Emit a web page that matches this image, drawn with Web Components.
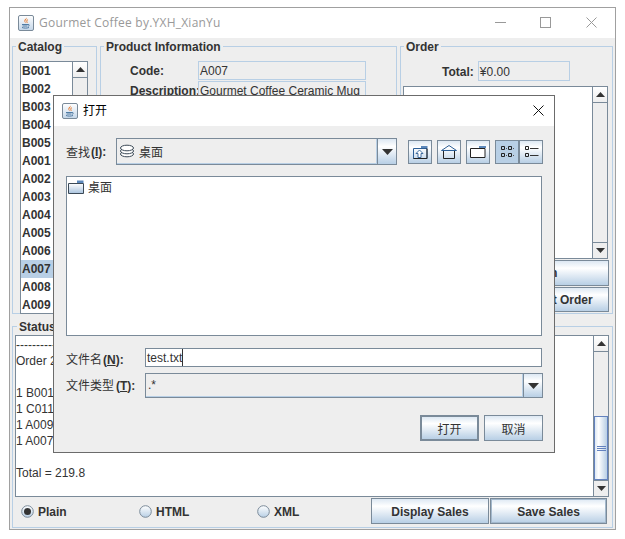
<!DOCTYPE html>
<html>
<head>
<meta charset="utf-8">
<title>Gourmet Coffee</title>
<style>
	html, body { margin: 0; padding: 0; background: white; }
	body { padding: 7px 0 0 9px; font: 12px "Liberation Sans", "Noto Sans CJK SC", sans-serif; color: #333; }

	/* layout of the page itself, the pieces are below */
	.top { display: flex; gap: 3px; box-sizing: border-box; height: 276px; padding: 1px 0 0 2px; }
	.row { display: grid; grid-template-columns: 68px 168px; grid-auto-rows: 19px; row-gap: 1px; margin-left: 29px; font-weight: bold; align-items: center; }
	.row span, .total span { padding-top: 1px; }
	.total { display: flex; align-items: center; height: 20px; margin-left: 41px; font-weight: bold; gap: 4px; }
	.order-text { height: 173px; margin: 5px 4px 0 2px; }
	.order-btns { display: flex; flex-direction: column; gap: 1px; margin: 1px 3px 0 2px; }
	.order-btns s-button { height: 26px; }
	.order-btns s-button + s-button { height: 25px; }
	.lines { padding-top: 1px; }
	.lines div { height: 16px; line-height: 16px; white-space: pre; }
	.bottom { display: flex; align-items: center; height: 28px; }
	.bottom s-radio:nth-child(1) { width: 118px; margin-left: 6px; }
	.bottom s-radio:nth-child(2) { width: 118px; }
	.bottom s-radio:nth-child(3) { width: 114px; }
	.bottom s-button { height: 26px; padding-top: 1px; }
	.list-item { height: 18px; line-height: 18px; font-weight: bold; padding-left: 1px; }
	.list-item.sel { background: #b8cfe5; }
</style>
</head>
<body>

<s-frame caption="Gourmet Coffee by.YXH_XianYu">
	<div class="top">
		<s-group label="Catalog" style="width:85px" pad="8px 0 0 7px">
			<s-scrollpane style="width:68px;height:253px">
				<div class="list-item">B001</div>
				<div class="list-item">B002</div>
				<div class="list-item">B003</div>
				<div class="list-item">B004</div>
				<div class="list-item">B005</div>
				<div class="list-item">A001</div>
				<div class="list-item">A002</div>
				<div class="list-item">A003</div>
				<div class="list-item">A004</div>
				<div class="list-item">A005</div>
				<div class="list-item">A006</div>
				<div class="list-item sel">A007</div>
				<div class="list-item">A008</div>
				<div class="list-item">A009</div>
			</s-scrollpane>
		</s-group>
		<s-group label="Product Information" style="width:297px" pad="8px 0 0 0">
			<div class="row">
				<span>Code:</span><s-field>A007</s-field>
				<span>Description:</span><s-field>Gourmet Coffee Ceramic Mug</s-field>
			</div>
		</s-group>
		<s-group label="Order" style="width:213px" pad="8px 0 0 0">
			<div class="total"><span>Total:</span><s-field style="width:92px;height:20px">¥0.00</s-field></div>
			<div class="order-text"><s-scrollpane style="height:100%"></s-scrollpane></div>
			<div class="order-btns">
				<s-button>Modify Order Item</s-button>
				<s-button>Register Sale of Current Order</s-button>
			</div>
		</s-group>
	</div>
	<s-group label="Status" style="margin:5px 0 0 2px;width:601px;height:209px;--legend-left:4px" pad="2px 3px 0 2px">
		<s-scrollpane style="height:162px" thumb="64,64">
			<div class="lines">
				<div>----------</div>
				<div>Order 2</div>
				<div> </div>
				<div>1 B001</div>
				<div>1 C011</div>
				<div>1 A009</div>
				<div>1 A007</div>
				<div> </div>
				<div>Total = 219.8</div>
			</div>
		</s-scrollpane>
		<div class="bottom">
			<s-radio checked>Plain</s-radio>
			<s-radio>HTML</s-radio>
			<s-radio>XML</s-radio>
			<s-button style="width:118px">Display Sales</s-button>
			<s-button focus style="width:117px;margin-left:1px">Save Sales</s-button>
		</div>
	</s-group>
</s-frame>

<s-file-dialog caption="打开"></s-file-dialog>

<script>
const JAVA_ICON = `<svg width="16" height="16" viewBox="0 0 16 16">
	<defs><linearGradient id="jg" x1="0" y1="0" x2="0" y2="1"><stop offset="0" stop-color="#fff"/><stop offset="1" stop-color="#c4d6e8"/></linearGradient></defs>
	<rect x=".5" y=".5" width="15" height="15" rx="1.5" fill="url(#jg)" stroke="#7a8a99"/>
	<path d="M8.600 2.500c.8 1.600-2 2.600-1.200 4.600.2.500.5.900.7 1.200-1.800-1.200-2.200-2.400-1.400-3.600.5-.7 1.700-1.200 1.900-2.200z" fill="#e8792b"/>
	<path d="M10 4.500c-1.200.7-1.500 1.500-1.100 2.300.2.400.3.800.1 1.200" fill="none" stroke="#e8792b"/>
	<path d="M4 9.500h6M4.500 11h5M4 12.500c2 .8 5 .8 7 0M10 9.500c1.500-.3 2 1.200 0 1.800" fill="none" stroke="#4f7ba3"/>
</svg>`;

const GRAD = 'linear-gradient(#dde8f3 0, #fff 30%, #b8cfe5 100%)';

class SFrame extends HTMLElement
{
	constructor() {
		super();
		this.attachShadow({mode: 'open'});
		this.shadowRoot.innerHTML = `
			<style>
				:host { display: block; width: 605px; height: 521px; border: 1px solid #a0a0a0; background: #eee; }
				#bar { display: flex; align-items: center; box-sizing: border-box; height: 30px; background: #fff; padding: 0 0 1px 8px; }
				#title { margin-left: 5px; flex: 1; font: 12px "Open Sans", sans-serif; letter-spacing: .23px; color: #999; }
				svg.ctl { display: block; }
				#ctls { display: flex; margin-right: 18px; }
			</style>
			<div id="bar">
				${JAVA_ICON}
				<span id="title">${this.getAttribute('caption')}</span>
				<div id="ctls">
					<svg class="ctl" width="11" height="11" style="margin-right:34px"><path d="M0 5.500h11" stroke="#999"/></svg>
					<svg class="ctl" width="11" height="11" style="margin-right:35px"><rect x=".5" y=".5" width="10" height="10" fill="none" stroke="#999"/></svg>
					<svg class="ctl" width="11" height="11"><path d="M.5 .5l10 10M10.500 .5l-10 10" stroke="#999"/></svg>
				</div>
			</div>
			<slot></slot>`;
	}
}

class SGroup extends HTMLElement
{
	constructor() {
		super();
		this.attachShadow({mode: 'open'});
		this.shadowRoot.innerHTML = `
			<style>
				:host { display: block; box-sizing: border-box; height: 100%; }
				fieldset { box-sizing: border-box; height: 100%; margin: 0; border: 1px solid #b8cfe5; padding: 0; min-width: 0; }
				legend { margin-left: var(--legend-left, 3px); padding: 0 2px; font-weight: bold; line-height: 16px; height: 14px; }
				#body { padding: ${this.getAttribute('pad') || '0'}; }
			</style>
			<fieldset><legend>${this.getAttribute('label')}</legend><div id="body"><slot></slot></div></fieldset>`;
	}
}

class SField extends HTMLElement
{
	constructor() {
		super();
		this.attachShadow({mode: 'open'});
		this.shadowRoot.innerHTML = `
			<style>
				:host { display: flex; align-items: center; box-sizing: border-box; height: 19px; border: 1px solid #b8cfe5; background: #eee; padding: 1px 0 0 1px; font-weight: normal; white-space: nowrap; overflow: hidden; }
			</style>
			<slot></slot>`;
	}
}

class SButton extends HTMLElement
{
	constructor() {
		super();
		this.attachShadow({mode: 'open'});
		this.shadowRoot.innerHTML = `
			<style>
				:host { display: flex; align-items: center; justify-content: center; box-sizing: border-box; border: 1px solid #7a8a99; background: ${GRAD}; font-weight: bold; white-space: nowrap; }
				:host([focus]) { box-shadow: inset 0 0 0 1px #a3b8cc; }
				:host([default]) { border-width: 2px; }
			</style>
			<slot></slot>`;
	}
}

class SRadio extends HTMLElement
{
	constructor() {
		super();
		this.attachShadow({mode: 'open'});
		let dot = this.hasAttribute('checked') ? '<circle cx="6.500" cy="6.500" r="3.500" fill="#333"/>' : '';
		this.shadowRoot.innerHTML = `
			<style>
				:host { display: flex; align-items: center; gap: 4px; box-sizing: border-box; font-weight: bold; }
				slot { display: block; padding-top: 1px; }
				svg { display: block; }
			</style>
			<svg width="13" height="13" viewBox="0 0 13 13">
				<defs><linearGradient id="r" x1="0" y1="0" x2="0" y2="1"><stop offset="0" stop-color="#fff"/><stop offset="1" stop-color="#b8cfe5"/></linearGradient></defs>
				<circle cx="6.500" cy="6.500" r="5.800" fill="url(#r)" stroke="#7a8a99"/>${dot}
			</svg>
			<slot></slot>`;
	}
}

class SScrollbar extends HTMLElement
{
	constructor() {
		super();
		this.attachShadow({mode: 'open'});
		let [start, size] = (this.getAttribute('thumb') || '0,0').split(',').map(Number);
		let arrow = d => `<div class="btn"><svg width="9" height="5"><path d="${d}" fill="#333"/></svg></div>`;
		this.shadowRoot.innerHTML = `
			<style>
				:host { display: flex; flex-direction: column; box-sizing: border-box; width: 15px; flex: none; background: #eee; border-left: 1px solid #7a8a99; }
				.btn { display: flex; align-items: center; justify-content: center; height: 16px; flex: none; box-sizing: border-box; background: linear-gradient(#fff, #eee); border-bottom: 1px solid #7a8a99; }
				.btn:last-child { border-bottom: 0; border-top: 1px solid #7a8a99; background: #eee; }
				.track { flex: 1; min-height: 0; overflow: hidden; }
				.thumb { display: flex; flex-direction: column; align-items: center; justify-content: center; gap: 1px; box-sizing: border-box; border: 1px solid #6382bf; background: linear-gradient(90deg, #dde8f3, #fff 30%, #b8cfe5); }
				.thumb i { display: block; width: 9px; height: 1px; background: #6382bf; }
			</style>
			${arrow('M0 5L4.500 0 9 5z')}
			<div class="track">${size ? `<div class="thumb" style="margin-top:${start}px;height:${size}px"><i></i><i></i><i></i></div>` : ''}</div>
			${arrow('M0 0h9L4.500 5z')}`;
	}
}

class SScrollpane extends HTMLElement
{
	constructor() {
		super();
		this.attachShadow({mode: 'open'});
		this.shadowRoot.innerHTML = `
			<style>
				:host { display: flex; box-sizing: border-box; border: 1px solid #7a8a99; background: #fff; }
				#view { flex: 1; min-width: 0; overflow: hidden; }
			</style>
			<div id="view"><slot></slot></div>
			<s-scrollbar thumb="${this.getAttribute('thumb') || '0,0'}"></s-scrollbar>`;
	}
}

class SCombo extends HTMLElement
{
	constructor() {
		super();
		this.attachShadow({mode: 'open'});
		this.shadowRoot.innerHTML = `
			<style>
				:host { display: flex; box-sizing: border-box; border: 1px solid #7a8a99; background: #eee; }
				#val { flex: 1; display: flex; align-items: center; gap: 4px; padding-left: 2px; box-sizing: border-box; border: 1px solid #b8cfe5; border-width: 0 1px 1px 0; }
				#arrow { width: 19px; flex: none; display: flex; align-items: center; justify-content: center; box-sizing: border-box; border-left: 1px solid #7a8a99; background: ${GRAD}; }
			</style>
			<div id="val"><slot></slot></div>
			<div id="arrow"><svg width="11" height="6"><path d="M0 0h11L5.500 6z" fill="#333"/></svg></div>`;
	}
}

const TOOL_ICONS = {
	up: `<path d="M3.500 6.500h13.500v10H3.500z" fill="none" stroke="#2d5f96"/><path d="M17 6.500v10H3.500" fill="none" stroke="#222"/><path d="M11 6V4h6.500v2z" fill="#5c88bb"/><path d="M6 11.500l3.500-3.500 3.500 3.500h-2v4H8v-4z" fill="#fff" stroke="#2d5f96" stroke-width=".9"/>`,
	home: `<path d="M2.500 8.500L10 3.500l7.500 5z" fill="none" stroke="#2d5f96"/><path d="M4.500 9v7.500h11V9" fill="none" stroke="#222"/>`,
	folder: `<path d="M2.500 6.500h14.500v9H2.500z" fill="#fff" stroke="#222"/><path d="M11 6V4h7v2z" fill="#5c88bb"/>`,
	list: `<path d="M4.500 4.500h3v3h-3zM11.500 4.500h3v3h-3zM4.500 11.500h3v3h-3zM11.500 11.500h3v3h-3z" fill="none" stroke="#222"/><path d="M9 6.500h1M16 6.500h1M9 13.500h1M16 13.500h1" stroke="#555"/>`,
	detail: `<path d="M4.500 4.500h3v3h-3zM4.500 11.500h3v3h-3z" fill="none" stroke="#222"/><path d="M9 6.500h8.500M9 13.500h8.500" stroke="#333"/>`
};

class SToolButton extends HTMLElement
{
	constructor() {
		super();
		this.attachShadow({mode: 'open'});
		this.shadowRoot.innerHTML = `
			<style>
				:host { display: flex; align-items: center; justify-content: center; box-sizing: border-box; width: 24px; height: 24px; border: 1px solid #7a8a99; background: ${GRAD}; }
				:host([pressed]) { background: #b8cfe5; }
				svg { display: block; }
			</style>
			<svg width="20" height="20" viewBox="0 0 20 20">${TOOL_ICONS[this.getAttribute('icon')]}</svg>`;
	}
}

class SFileDialog extends HTMLElement
{
	constructor() {
		super();
		this.attachShadow({mode: 'open'});
		const CJK = '"Noto Sans CJK SC", "Liberation Sans", sans-serif';
		this.shadowRoot.innerHTML = `
			<style>
				:host { position: absolute; left: 53px; top: 95px; width: 502px; height: 358px; box-sizing: border-box; border: 1px solid #6b6b6b; background: #eee; font: 12px ${CJK}; color: #333; }
				#bar { display: flex; align-items: center; box-sizing: border-box; height: 30px; background: #fff; padding: 0 10px 1px 8px; color: #000; }
				#bar span { flex: 1; margin-left: 5px; line-height: 16px; margin-top: -2px; }
				#body { padding: 12px 12px 0 12px; }
				.look { display: flex; height: 27px; width: 477px; }
				.lbl { width: 50px; flex: none; display: flex; align-items: center; }
				b { font: bold 12px "Liberation Sans", sans-serif; margin-left: 1px; }
				u { text-underline-offset: 1px; }
				s-combo { flex: none; }
				.tools { display: flex; align-items: center; margin-left: 11px; }
				.tools s-tool-button + s-tool-button { margin-left: 5px; }
				.tools s-tool-button[icon=detail] { margin-left: 0; }
				#files { box-sizing: border-box; height: 160px; margin-top: 11px; border: 1px solid #7a8a99; background: #fff; padding: 2px 1px; }
				.file { display: flex; align-items: center; gap: 4px; height: 15px; }
				.form { display: grid; grid-template-columns: 79px 397px; align-items: center; margin-top: 12px; row-gap: 6px; }
				.form > div:first-child { margin-top: 2px; }
				.form > div:nth-child(3) { margin-bottom: 2px; }
				#name { box-sizing: border-box; height: 19px; border: 1px solid #7a8a99; background: #fff; font: 12px "Liberation Sans", sans-serif; line-height: 19px; padding-left: 1px; overflow: hidden; }
				#name i { display: inline-block; width: 1px; height: 17px; background: #333; vertical-align: -4px; }
				#type { height: 25px; width: 398px; font: 12px "Liberation Sans", sans-serif; }
				.actions { display: flex; justify-content: flex-end; gap: 5px; margin-top: 17px; width: 477px; }
				.actions s-button { width: 59px; height: 26px; font: 12px ${CJK}; }
			</style>
			<div id="bar">
				${JAVA_ICON}
				<span>${this.getAttribute('caption')}</span>
				<svg width="11" height="11"><path d="M.5 .5l10 10M10.500 .5l-10 10" stroke="#111"/></svg>
			</div>
			<div id="body">
				<div class="look">
					<div class="lbl">查找<b>(<u>I</u>):</b></div>
					<s-combo style="width:281px">
						<svg width="16" height="14" viewBox="0 0 16 14"><g fill="#fff" stroke="#3c4a57"><ellipse cx="8" cy="10" rx="6.500" ry="2.800"/><ellipse cx="8" cy="7" rx="6.500" ry="2.800"/><ellipse cx="8" cy="4" rx="6.500" ry="2.800"/></g></svg>
						<span>桌面</span>
					</s-combo>
					<div class="tools">
						<s-tool-button icon="up"></s-tool-button>
						<s-tool-button icon="home"></s-tool-button>
						<s-tool-button icon="folder"></s-tool-button>
						<s-tool-button icon="list" pressed></s-tool-button>
						<s-tool-button icon="detail"></s-tool-button>
					</div>
				</div>
				<div id="files">
					<div class="file">
						<svg width="16" height="14" viewBox="0 0 16 14"><defs><linearGradient id="f" x1="0" y1="0" x2="0" y2="1"><stop offset="0" stop-color="#fff"/><stop offset="1" stop-color="#a9c3de"/></linearGradient></defs><path d="M.5 3.500h15v10H.5z" fill="url(#f)" stroke="#3c4a57"/><path d="M9 3V.5h6.500V3z" fill="#5c88bb"/></svg>
						<span>桌面</span>
					</div>
				</div>
				<div class="form">
					<div>文件名<b>(<u>N</u>):</b></div>
					<div id="name">test.txt<i></i></div>
					<div>文件类型<b style="margin-left:2px">(<u>T</u>):</b></div>
					<s-combo id="type">.*</s-combo>
				</div>
				<div class="actions">
					<s-button default>打开</s-button>
					<s-button>取消</s-button>
				</div>
			</div>`;
	}
}

window.customElements.define('s-frame', SFrame);
window.customElements.define('s-group', SGroup);
window.customElements.define('s-field', SField);
window.customElements.define('s-button', SButton);
window.customElements.define('s-radio', SRadio);
window.customElements.define('s-scrollbar', SScrollbar);
window.customElements.define('s-scrollpane', SScrollpane);
window.customElements.define('s-combo', SCombo);
window.customElements.define('s-tool-button', SToolButton);
window.customElements.define('s-file-dialog', SFileDialog);
</script>
</body>
</html>
